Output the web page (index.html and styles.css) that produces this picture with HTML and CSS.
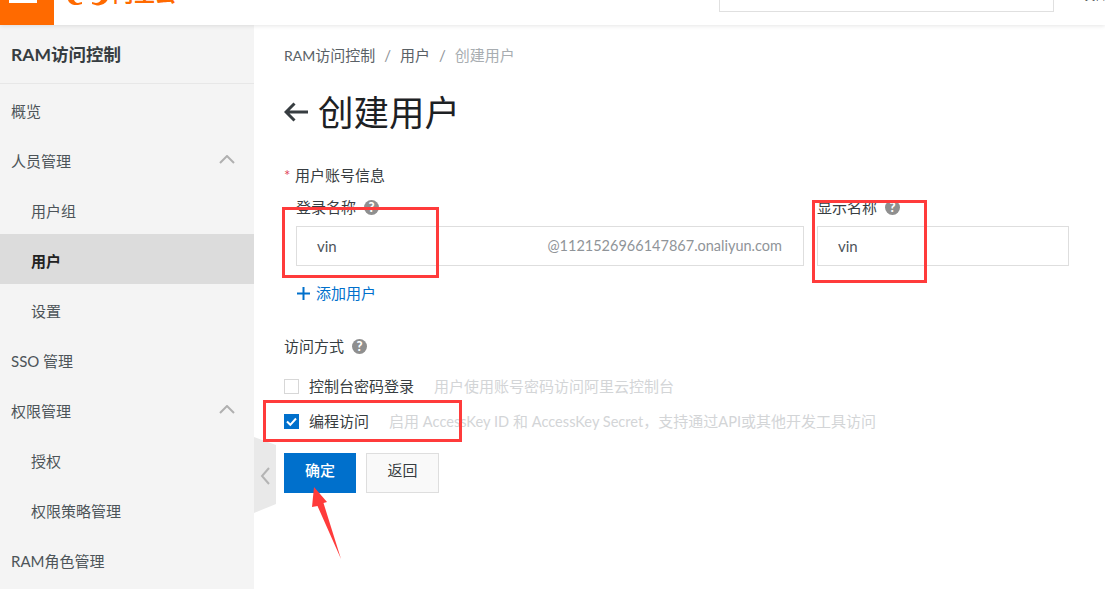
FILE: index.html
```html
<!DOCTYPE html>
<html lang="zh">
<head>
<meta charset="utf-8">
<title>创建用户</title>
<link rel="stylesheet" href="styles.css">
</head>
<body>
<header class="topbar">
  <div class="burger"><span class="burger-line"></span></div>
  <div class="logo">
    <svg class="logo-mark" width="40" height="6" viewBox="0 0 40 6"><path d="M0 0 C1 3 4 5.500 10 5 L14 4 L14 2 L10 3 C8 3 6.500 1.500 6 0 Z M24 4 L29 5.500 C34 5.500 38 3 39.500 0 L33 0 C32 2 30 3 28 3 L24 2 Z" fill="#ff6a00"/></svg>
    <span class="logo-text">阿里云</span>
  </div>
  <div class="search"></div>
  <div class="account">文档</div>
</header>
<div class="layout">
  <aside class="sidebar">
    <div class="side-title">RAM访问控制</div>
    <nav class="side-nav">
      <div class="nav-item">概览</div>
      <div class="nav-item">人员管理<svg class="chev" width="16" height="9" viewBox="0 0 16 9"><path d="M1 8 L8 1 L15 8" fill="none" stroke="#b0b0b0" stroke-width="2"/></svg></div>
      <div class="nav-item sub">用户组</div>
      <div class="nav-item sub active">用户</div>
      <div class="nav-item sub">设置</div>
      <div class="nav-item">SSO 管理</div>
      <div class="nav-item">权限管理<svg class="chev" width="16" height="9" viewBox="0 0 16 9"><path d="M1 8 L8 1 L15 8" fill="none" stroke="#b0b0b0" stroke-width="2"/></svg></div>
      <div class="nav-item sub">授权</div>
      <div class="nav-item sub">权限策略管理</div>
      <div class="nav-item">RAM角色管理</div>
    </nav>
  </aside>
  <main class="content">
    <div class="crumbs"><span><span class="lat-small">RAM</span>访问控制</span><span class="sep">/</span><span>用户</span><span class="sep">/</span><span class="crumb-now">创建用户</span></div>
    <div class="page-head">
      <svg class="back" width="24" height="20" viewBox="0 0 24 20"><path d="M24 10 H2 M10.500 1.500 L2 10 L10.500 18.500" fill="none" stroke="#373d41" stroke-width="3"/></svg>
      <h1 class="page-title">创建用户</h1>
    </div>
    <div class="section-label"><span class="star">*</span>用户账号信息</div>
    <div class="user-row">
      <div class="field login">
        <div class="field-label">登录名称<span class="help">?</span></div>
        <div class="input"><span>vin</span><span class="suffix">@1121526966147867.onaliyun.com</span></div>
      </div>
      <div class="field display">
        <div class="field-label">显示名称<span class="help">?</span></div>
        <div class="input"><span>vin</span></div>
      </div>
    </div>
    <div class="add-user"><svg class="plus" width="13" height="13" viewBox="0 0 13 13"><path d="M6.500 0 V13 M0 6.500 H13" stroke="#0070cc" stroke-width="2"/></svg>添加用户</div>
    <div class="section-label access">访问方式<span class="help">?</span></div>
    <div class="check-row first"><span class="check"></span><span class="check-label">控制台密码登录</span><span class="hint">用户使用账号密码访问阿里云控制台</span></div>
    <div class="check-row"><span class="check on"><svg width="15" height="15" viewBox="0 0 15 15"><path d="M3 7.500 L6.300 10.800 L12 4.500" fill="none" stroke="#fff" stroke-width="2"/></svg></span><span class="check-label">编程访问</span><span class="hint">启用 <span class="lat">AccessKey ID</span> 和 <span class="lat">AccessKey Secret</span>，支持通过<span class="lat">API</span>或其他开发工具访问</span></div>
    <div class="actions"><button class="btn primary">确定</button><button class="btn">返回</button></div>
  </main>
</div>
<svg class="collapse" width="22" height="76" viewBox="0 0 22 76"><path d="M0 0 L22 8 V67 L0 76 Z" fill="#e9e9e9"/><path d="M15 31 L8 39 L15 47" fill="none" stroke="#b4b4b4" stroke-width="2"/></svg>
<div class="mark mark-login"></div>
<div class="mark mark-display"></div>
<div class="mark mark-access"></div>
<svg class="mark-arrow" width="50" height="85" viewBox="0 0 50 85"><path d="M14 7 L27 22 L23.500 23 L41 79 L17.500 26 L12 27 Z" fill="#ff3b3b"/></svg>
</body>
</html>
```
FILE: styles.css
```css
* { box-sizing: border-box; }
html, body { margin: 0; height: 100%; }
body {
  position: relative;
  height: 589px;
  overflow: hidden;
  background: #fff;
  color: #373d41;
  font: 15px/20px Lato, "Noto Sans CJK SC", sans-serif;
}
.topbar {
  height: 25px;
  display: flex;
  align-items: flex-end;
  overflow: hidden;
  background: #fff;
  box-shadow: 0 1px 4px rgba(0,0,0,.1);
  position: relative;
}
.burger { width: 54px; height: 25px; background: #ff6a00; padding: 0 0 0 9px; flex: none; }
.burger-line { display: block; width: 28px; height: 3px; background: #fff; }
.logo { display: flex; align-self: flex-start; margin-left: 14px; width: 651px; flex: none; height: 6px; overflow: hidden; }
.logo-mark { flex: none; }
.logo-text {
  margin: -19px 0 0 5px;
  font-size: 21px;
  line-height: 24px;
  font-weight: 700;
  color: #ff6a00;
}
.search { width: 335px; height: 12px; margin-bottom: 13px; flex: none; border: 1px solid #e0e0e0; border-top: 0; }
.account { margin: 0 0 24px 31px; font-size: 10px; line-height: 10px; color: #333; white-space: nowrap; flex: none; }

.layout { display: flex; height: 564px; }
.sidebar { width: 254px; flex: none; background: #f4f4f4; overflow: hidden; }
.side-title {
  height: 59px;
  padding: 0 11px;
  border-bottom: 1px solid #e7e7e7;
  font-size: 17.500px;
  font-weight: 700;
  line-height: 60px;
  color: #373d41;
}
.nav-item {
  height: 50px;
  padding: 4px 19px 0 11px;
  display: flex;
  align-items: center;
  justify-content: space-between;
  color: #4d5459;
}
.nav-item.sub { padding-left: 31px; }
.nav-item.active { background: #dcdcdc; color: #222; font-weight: 700; }
.chev { flex: none; margin-top: -3px; }

.content { flex: 1; padding: 20px 0 0 30px; min-width: 0; }
.crumbs { display: flex; height: 20px; line-height: 20px; color: #5a6166; }
.lat-small { font-size: 14px; }
.lat { font-size: 14.600px; }
.sep { margin: 0 9px; color: #8d9297; }
.crumb-now { color: #a8adb1; }
.page-head { display: flex; align-items: center; height: 50px; margin-top: 22px; }
.back { flex: none; margin-right: 10px; }
.page-title { margin: 2px 0 0; font-size: 35.500px; font-weight: 400; line-height: 50px; color: #1d2124; }
.section-label { margin-top: 28px; height: 20px; display: flex; align-items: center; color: #373d41; }
.star { color: #e0455a; width: 11px; flex: none; }
.user-row { display: flex; margin: 12px 0 0 12px; gap: 13px; }
.field.login { width: 508px; }
.field.display { width: 252px; }
.field-label { display: flex; align-items: center; height: 20px; margin-bottom: 9px; color: #373d41; }
.help {
  width: 15px; height: 15px; margin-left: 8px; border-radius: 50%;
  background: #8f8f8f; color: #fff; font-size: 13px; line-height: 15px; font-weight: 900; text-align: center;
}
.input {
  height: 40px;
  display: flex;
  align-items: center;
  justify-content: space-between;
  padding: 0 21px 0 20px;
  border: 1px solid #dedede;
  color: #4d5459;
}
.suffix { color: #8f9499; font-size: 14.500px; }
.add-user { display: flex; align-items: center; height: 20px; margin: 17px 0 0 13px; color: #0070cc; }
.plus { margin-right: 6px; flex: none; }
.section-label.access { margin-top: 33px; }
.check-row { display: flex; align-items: center; height: 20px; margin-top: 15px; }
.check-row.first { margin-top: 20px; }
.check { width: 15px; height: 15px; border: 1px solid #d7d7d7; background: #fff; flex: none; margin-right: 10px; }
.check.on { border: 0; background: #0070cc; }
.check.on svg { display: block; }
.check-label { color: #373d41; }
.hint { margin-left: 20px; color: #d3d5d7; }
.actions { display: flex; gap: 10px; margin-top: 22px; }
.btn {
  width: 73px; height: 40px; padding: 0 0 6px;
  border: 1px solid #dedede;
  background: #f9f9f9;
  color: #373d41;
  font: inherit;
}
.btn.primary { width: 72px; border: 0; background: #0070cc; color: #fff; font-weight: 500; }

.collapse { position: absolute; left: 254px; top: 437px; }
.mark { position: absolute; border: 3px solid #ff3b3b; }
.mark-login { left: 282px; top: 207px; width: 157px; height: 71px; }
.mark-display { left: 812px; top: 200px; width: 115px; height: 83px; }
.mark-access { left: 263px; top: 400px; width: 199px; height: 42px; }
.mark-arrow { position: absolute; left: 300px; top: 480px; }
```
